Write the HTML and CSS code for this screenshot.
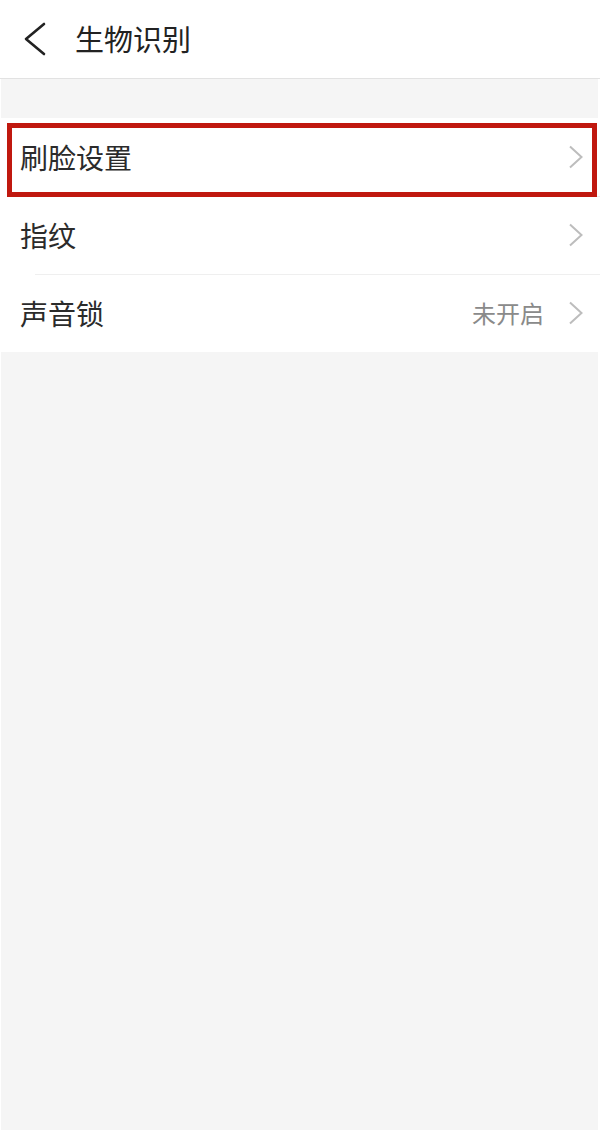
FILE: index.html
```html
<!DOCTYPE html>
<html lang="zh-CN">
<head>
    <meta charset="UTF-8">
    <meta name="viewport" content="width=device-width, initial-scale=1.0">
    <title>生物识别</title>
    <link rel="stylesheet" href="styles.css">
</head>
<body>
    <div class="header">
        <span class="back">
            <svg width="24" height="34" viewBox="0 0 24 34"><polyline points="21,2 3,17 21,32" fill="none" stroke="#222" stroke-width="2.6" stroke-linecap="round" stroke-linejoin="round"/></svg>
        </span>
        <span class="title">生物识别</span>
    </div>
    <div class="page">
        <div class="list">
            <div class="row marked">
                <span class="label">刷脸设置</span>
                <span class="arrow"><svg width="16" height="24" viewBox="0 0 16 24"><polyline points="2,1.5 13.5,12 2,22.5" fill="none" stroke="#bdbdbd" stroke-width="2"/></svg></span>
            </div>
            <div class="row">
                <span class="label">指纹</span>
                <span class="arrow"><svg width="16" height="24" viewBox="0 0 16 24"><polyline points="2,1.5 13.5,12 2,22.5" fill="none" stroke="#bdbdbd" stroke-width="2"/></svg></span>
            </div>
            <div class="row">
                <span class="label">声音锁</span>
                <span class="state">未开启</span>
                <span class="arrow"><svg width="16" height="24" viewBox="0 0 16 24"><polyline points="2,1.5 13.5,12 2,22.5" fill="none" stroke="#bdbdbd" stroke-width="2"/></svg></span>
            </div>
        </div>
    </div>
</body>
</html>
```

FILE: styles.css
```css
html, body {
    margin: 0;
    padding: 0;
    height: 100%;
}
body {
    font-family: "Noto Sans CJK SC", "Noto Sans", sans-serif;
    background-color: #fff;
    color: #333;
    display: flex;
    flex-direction: column;
}
.header {
    height: 78px;
    display: flex;
    align-items: center;
    border-bottom: 1px solid #e2e2e2;
    background-color: #fff;
}
.back {
    display: flex;
    margin-left: 23px;
    margin-right: 28px;
}
.title {
    font-size: 29px;
    color: #222;
    line-height: 1;
    margin-top: -2px;
}
.page {
    flex: 1;
    background-color: #f5f5f5;
    padding-top: 39px;
    margin: 0 2px 0 1px;
}
.list {
    background-color: #fff;
    margin: 0 -2px 0 -1px;
}
.row {
    height: 78px;
    display: flex;
    align-items: center;
    padding-left: 20px;
    position: relative;
}
.row + .row::before {
    content: '';
    position: absolute;
    top: 0;
    left: 35px;
    right: 0;
    border-top: 1px solid #efefef;
}
.label {
    flex: 1;
    font-size: 28px;
    line-height: 1;
    color: #2b2b2b;
}
.state {
    font-size: 24px;
    color: #8a8a8a;
    line-height: 1;
    margin-right: 24px;
}
.arrow {
    display: flex;
    margin-right: 16px;
}
.marked::after {
    content: '';
    position: absolute;
    left: 7px;
    right: 3px;
    top: 5px;
    bottom: -1px;
    border: 5px solid #c0180f;
    z-index: 1;
}
```
